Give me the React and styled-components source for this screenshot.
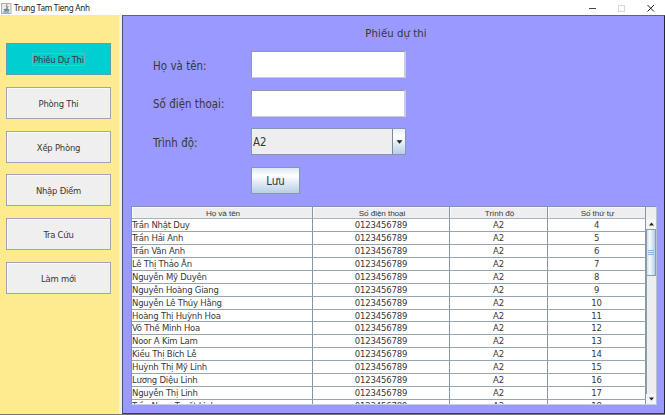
import React from "react";
import styled, { createGlobalStyle } from "styled-components";

const GlobalStyle = createGlobalStyle`
  * { box-sizing: border-box; }
  body { margin: 0; overflow: hidden; background: #fff; }
  button, input { font: inherit; color: inherit; padding: 0; margin: 0; border-radius: 0; outline: none; }
`;

const Window = styled.div`
  width: 665px;
  height: 415px;
  display: flex;
  flex-direction: column;
  overflow: hidden;
  background: #fff;
  border-bottom: 1px solid #77776c;
  color: #383838;
  font-family: "DejaVu Sans Condensed", "DejaVu Sans", sans-serif;
  font-stretch: condensed;
`;

const TitleBar = styled.header`
  height: 15px;
  flex: none;
  display: flex;
  align-items: center;
  padding: 0 8px 0 1px;
`;

const Title = styled.span`
  flex: 1;
  margin-left: 2px;
  font: 8.1px/14px "Noto Sans", sans-serif;
  letter-spacing: -0.28px;
  color: #222;
  white-space: nowrap;
`;

const WindowControls = styled.svg`
  flex: none;
  width: 68px;
  height: 14px;
`;

const Body = styled.div`
  flex: 1;
  min-height: 0;
  display: flex;
`;

const Sidebar = styled.nav`
  width: 119px;
  flex: none;
  padding: 28px 8px 0 6px;
  background: #feeb90;
  display: flex;
  flex-direction: column;
  gap: 11.8px;
`;

const NavButton = styled.button`
  height: 32px;
  flex: none;
  display: flex;
  align-items: center;
  justify-content: center;
  padding-top: 1px;
  border: 1px solid ${(p) => (p.$active ? "#5f9fae" : "#9ba8b2")};
  box-shadow: ${(p) => (p.$active ? "none" : "inset 1px 1px 0 #f9f9f9")};
  background: ${(p) => (p.$active ? "#00ced1" : "#efefef")};
`;

const NavLabel = styled.span`
  font-size: 9.4px;
  line-height: 11px;
  letter-spacing: -0.22px;
  white-space: nowrap;
  outline: ${(p) => (p.$active ? "1px solid #62b9c4" : "none")};
`;

const Divider = styled.div`
  width: 3px;
  flex: none;
  background: #f0f0f0;
`;

const Panel = styled.main`
  width: 543px;
  height: 399px;
  flex: none;
  display: flex;
  flex-direction: column;
  border: 1px solid #50506a;
  border-top-color: #606080;
  border-bottom-color: #3c3c46;
  border-right-color: #25253a;
  background: #9999ff;
`;

const Heading = styled.h1`
  margin: 10px 0 0 5px;
  height: 15px;
  font-size: 11.3px;
  line-height: 15px;
  letter-spacing: 0.05px;
  font-weight: normal;
  text-align: center;
`;

const Form = styled.form`
  display: grid;
  grid-template-columns: 98px 156px;
  grid-template-rows: repeat(4, 27px);
  row-gap: 11.67px;
  margin: 10px 0 0 30px;
  align-items: center;
`;

const Label = styled.label`
  padding-top: 2px;
  font-size: 11.4px;
  line-height: 16px;
  letter-spacing: 0.05px;
  white-space: nowrap;
`;

const TextField = styled.input`
  width: 155px;
  height: 27px;
  border: 1px solid #8c98b4;
  border-right: 2px solid #c3cfdb;
  border-bottom-color: #c3cfdb;
  background: #fff;
`;

const Select = styled.div`
  width: 155px;
  height: 27px;
  display: flex;
  border: 1px solid #8397b2;
  background: #eee;
`;

const SelectValue = styled.span`
  flex: 1;
  padding-left: 1px;
  font-size: 11.4px;
  line-height: 26px;
`;

const SelectArrow = styled.span`
  width: 13px;
  border-left: 1px solid #7a8a99;
  background: linear-gradient(#e5edf4, #fff 30%, #b8cfe5);
  display: flex;
  align-items: center;
  justify-content: center;
`;

const SaveButton = styled.button`
  grid-column: 2;
  width: 49px;
  height: 27px;
  padding-top: 1px;
  border: 1px solid #8397b2;
  background: linear-gradient(#dde8f3, #fff 32%, #e0eaf3 60%, #b8cfe5);
  font-size: 11.4px;
`;

const TableFrame = styled.section`
  width: 526px;
  height: 199px;
  margin: 12px 0 0 8px;
  border: 1px solid #8292ad;
  border-right-color: #b5c2dc;
  border-bottom-color: #c3cfe8;
  display: flex;
  overflow: hidden;
  background: #fff;
`;

const Table = styled.div`
  width: 514px;
  flex: none;
  border-right: 1px solid #8292a5;
`;

const Row = styled.div`
  display: grid;
  grid-template-columns: 181px 137px 98px 98px;
`;

const HeaderCell = styled.div`
  height: 12.5px;
  border-right: 1px solid #8797a5;
  border-bottom: 1px solid #a7b3bf;
  background: #eee;
  box-shadow: inset 1px 1px 0 #fafafa;
  padding-left: 2px;
  font: 8.1px/13px "Liberation Sans", Arial, sans-serif;
  letter-spacing: -0.06px;
  text-align: center;
  white-space: nowrap;
`;

const Cell = styled.div`
  height: 12.88px;
  border-right: 1px solid #8797a5;
  border-bottom: 1px solid #97a5b3;
  text-align: ${(p) => (p.$left ? "left" : "center")};
  font-size: 9.45px;
  letter-spacing: ${(p) => (p.$left ? -0.22 : -0.16)}px;
  line-height: 12.6px;
  white-space: nowrap;
`;

const ScrollColumn = styled.div`
  flex: 1;
  display: flex;
  flex-direction: column;
`;

const ScrollCorner = styled.div`
  height: 12px;
  background: #eee;
`;

const ScrollButton = styled.div`
  height: 10px;
  display: flex;
  align-items: center;
  justify-content: center;
  background: #f4f4f4;
`;

const Track = styled.div`
  flex: 1;
  background: #eee;
  border-left: 1px solid #8b9cac;
`;

const Thumb = styled.div`
  height: 47px;
  border: 1px solid #7d9ccf;
  border-left: 0;
  background: linear-gradient(90deg, #cfdff0, #f7fafd 35%, #b8cfe5);
  display: flex;
  align-items: center;
  justify-content: center;
`;

const Icon = styled.svg`
  display: block;
  flex: none;
`;

function JavaIcon() {
  return (
    <Icon width="11" height="12" viewBox="0 0 11 12">
      <rect x="0.5" y="1.5" width="9.5" height="10" fill="#e4edf5" stroke="#a6b3bf" />
      <path d="M6.2 2 C4 4 7 4.6 5.2 7 M7.3 4 C5.7 5.2 7.2 5.7 6.1 7" fill="none" stroke="#e58b36" strokeWidth="1.1" />
      <path d="M2.8 7.4 H7.2 M3.3 8.6 H6.8 M2.3 10 H8.2 M7.3 7.5 Q9.2 7.5 7.2 8.9" fill="none" stroke="#4f7ca6" strokeWidth="1" />
    </Icon>
  );
}

function Arrow({ up, size = 5 }) {
  return (
    <Icon width={size} height="4" viewBox="0 0 6 4">
      <path d={up ? "M0 3.7 L3 0.3 L6 3.7 Z" : "M0 0.3 L6 0.3 L3 3.7 Z"} fill="#222" />
    </Icon>
  );
}

const NAV = ["Phiếu Dự Thi", "Phòng Thi", "Xếp Phòng", "Nhập Điểm", "Tra Cứu", "Làm mới"];

const NAMES = [
  "Trần Nhật Duy",
  "Trần Hải Anh",
  "Trần Vân Anh",
  "Lê Thị Thảo Ân",
  "Nguyễn Mỹ Duyên",
  "Nguyễn Hoàng Giang",
  "Nguyễn Lê Thúy Hằng",
  "Hoàng Thị Huỳnh Hoa",
  "Võ Thế Minh Hoa",
  "Noor A Kim Lam",
  "Kiều Thị Bích Lễ",
  "Huỳnh Thị Mỹ Linh",
  "Lương Diệu Linh",
  "Nguyễn Thị Linh",
  "Trần Ngọc Tuyết Linh",
];

const HEADERS = ["Họ và tên", "Số điện thoại", "Trình độ", "Số thứ tự"];

export default function App() {
  return (
    <>
      <GlobalStyle />
      <Window>
        <TitleBar>
          <JavaIcon />
          <Title>Trung Tam Tieng Anh</Title>
          <WindowControls viewBox="0 0 68 14">
            <path d="M0 7.5 H7" stroke="#444" />
            <rect x="29.5" y="4.5" width="6" height="6" fill="none" stroke="#d8d8d8" />
            <path d="M58.5 4 L65 10.5 M65 4 L58.5 10.5" stroke="#222" strokeWidth="1" />
          </WindowControls>
        </TitleBar>
        <Body>
          <Sidebar>
            {NAV.map((label, i) => (
              <NavButton key={label} type="button" $active={i === 0}>
                <NavLabel $active={i === 0}>{label}</NavLabel>
              </NavButton>
            ))}
          </Sidebar>
          <Divider />
          <Panel>
            <Heading>Phiếu dự thi</Heading>
            <Form>
              <Label>Họ và tên:</Label>
              <TextField aria-label="Họ và tên" />
              <Label>Số điện thoại:</Label>
              <TextField aria-label="Số điện thoại" />
              <Label>Trình độ:</Label>
              <Select>
                <SelectValue>A2</SelectValue>
                <SelectArrow>
                  <Arrow size={7} />
                </SelectArrow>
              </Select>
              <SaveButton type="button">Lưu</SaveButton>
            </Form>
            <TableFrame>
              <Table>
                <Row>
                  {HEADERS.map((h) => (
                    <HeaderCell key={h}>{h}</HeaderCell>
                  ))}
                </Row>
                {NAMES.map((name, i) => (
                  <Row key={name}>
                    <Cell $left>{name}</Cell>
                    <Cell>0123456789</Cell>
                    <Cell>A2</Cell>
                    <Cell>{i + 4}</Cell>
                  </Row>
                ))}
              </Table>
              <ScrollColumn>
                <ScrollCorner />
                <ScrollButton>
                  <Arrow up />
                </ScrollButton>
                <Track>
                  <Thumb>
                    <Icon width="6" height="5" viewBox="0 0 6 5">
                      <path d="M0 0.5 H6 M0 2.5 H6 M0 4.5 H6" stroke="#94aedb" />
                    </Icon>
                  </Thumb>
                </Track>
                <ScrollButton>
                  <Arrow />
                </ScrollButton>
              </ScrollColumn>
            </TableFrame>
          </Panel>
        </Body>
      </Window>
    </>
  );
}
